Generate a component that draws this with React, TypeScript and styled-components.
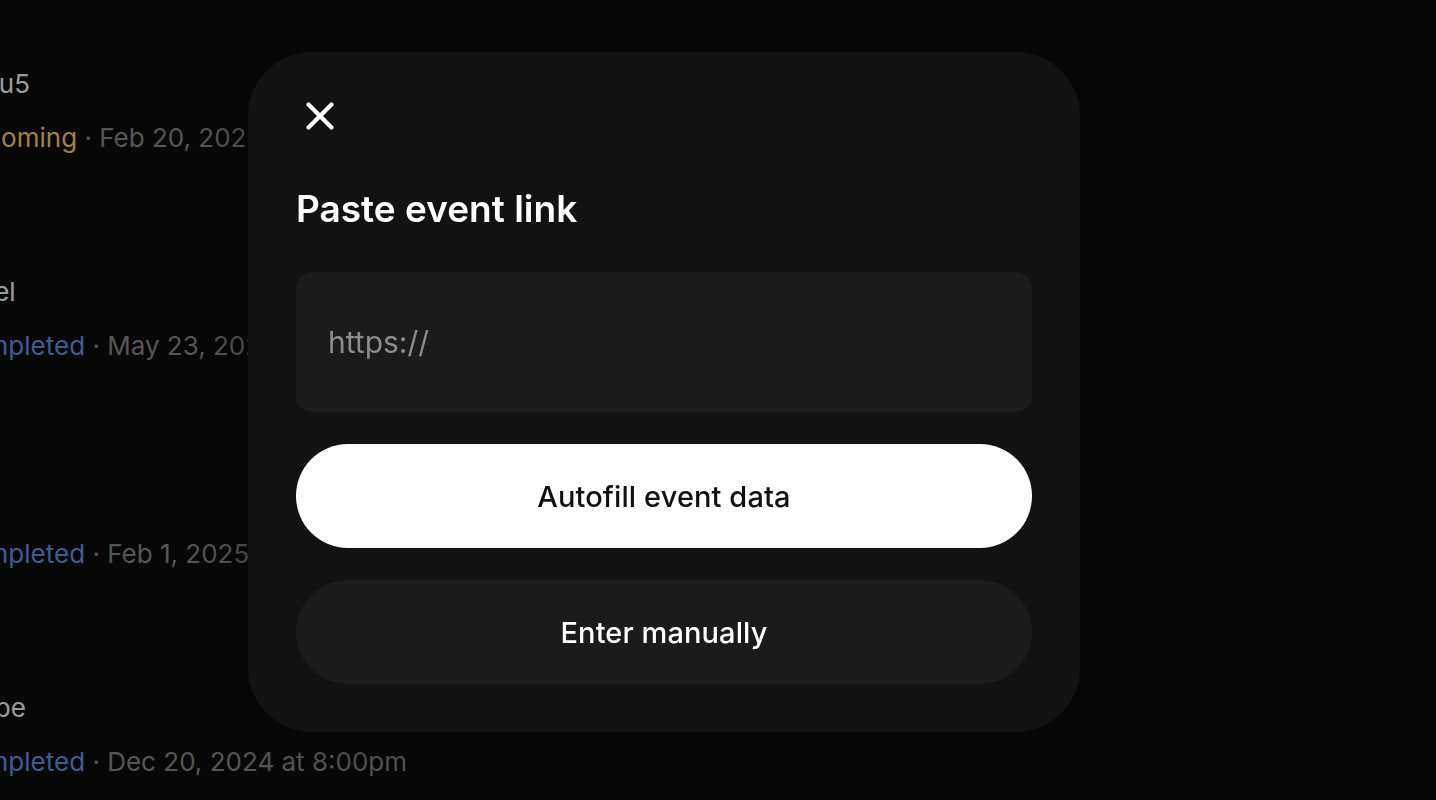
import React from "react";
import styled, { createGlobalStyle } from "styled-components";

const GlobalStyle = createGlobalStyle`
  html, body {
    margin: 0;
    padding: 0;
    background: #0c0c0c;
    font-family: Inter, "Noto Sans", sans-serif;
    -webkit-font-smoothing: antialiased;
  }
  body { overflow: hidden; }
  * { box-sizing: border-box; }
`;

const Page = styled.div`
  width: 1436px;
  height: 800px;
  overflow: hidden;
  background: #0c0c0c;
`;

const EventList = styled.ul`
  list-style: none;
  margin: 0 0 0 -49px;
  padding: 68px 0 0 0;
  display: flex;
  flex-direction: column;
  gap: 120px;
`;

const EventItem = styled.li`
  display: flex;
  flex-direction: column;
  gap: 20px;
  white-space: nowrap;
`;

const EventTitle = styled.div`
  font-size: 26px;
  line-height: 32px;
  color: #ededed;
  font-weight: 400;
`;

const EventMeta = styled.div`
  font-size: 26px;
  line-height: 36px;
  color: #858585;
`;

const Status = styled.span<{ $tone: "upcoming" | "completed" }>`
  color: ${(p) => (p.$tone === "upcoming" ? "#f0cb62" : "#5b92e4")};
`;

const Backdrop = styled.div`
  position: fixed;
  inset: 0;
  background: rgba(0, 0, 0, 0.35);
  display: flex;
  align-items: flex-start;
  justify-content: flex-start;
  padding: 52px 0 0 248px;
`;

const Dialog = styled.div`
  width: 832px;
  background: #121212;
  border-radius: 64px;
  padding: 40px 48px 48px;
  display: flex;
  flex-direction: column;
  box-shadow: 0 0 60px 10px rgba(0, 0, 0, 0.35);
`;

const CloseButton = styled.button`
  width: 48px;
  height: 48px;
  padding: 0;
  border: 0;
  background: transparent;
  display: flex;
  align-items: center;
  justify-content: center;
  cursor: pointer;
`;

const Title = styled.h2`
  margin: 47px 0 0;
  font-size: 37px;
  line-height: 44px;
  font-weight: 600;
  color: #ffffff;
  letter-spacing: 0;
`;

const UrlField = styled.input`
  margin-top: 41px;
  height: 140px;
  width: 100%;
  border: 0;
  outline: none;
  border-radius: 16px;
  background: #1b1b1b;
  padding: 0 32px;
  font-family: inherit;
  font-size: 30px;
  color: #ffffff;
  &::placeholder {
    color: #8c8c8c;
  }
`;

const ActionButton = styled.button<{ $primary?: boolean }>`
  margin-top: 32px;
  height: 104px;
  width: 100%;
  border: 0;
  border-radius: 52px;
  font-family: inherit;
  font-size: 29px;
  font-weight: 500;
  letter-spacing: 0.1px;
  background: ${(p) => (p.$primary ? "#ffffff" : "#1b1b1b")};
  color: ${(p) => (p.$primary ? "#111111" : "#ffffff")};
  cursor: pointer;
`;

const events = [
  { title: "Maru5", status: "Upcoming", tone: "upcoming" as const, date: "Feb 20, 2026 at 7:00pm" },
  { title: "Hotel", status: "Completed", tone: "completed" as const, date: "May 23, 2025 at 6:30pm" },
  { title: "Go", status: "Completed", tone: "completed" as const, date: "Feb 1, 2025 at 9:00pm" },
  { title: "Grape", status: "Completed", tone: "completed" as const, date: "Dec 20, 2024 at 8:00pm" },
];

export default function App() {
  return (
    <>
      <GlobalStyle />
      <Page>
        <EventList>
          {events.map((e) => (
            <EventItem key={e.title}>
              <EventTitle>{e.title}</EventTitle>
              <EventMeta>
                <Status $tone={e.tone}>{e.status}</Status> · {e.date}
              </EventMeta>
            </EventItem>
          ))}
        </EventList>
      </Page>
      <Backdrop>
        <Dialog role="dialog" aria-label="Paste event link">
          <CloseButton aria-label="Close">
            <svg width="28" height="28" viewBox="0 0 28 28" fill="none">
              <path d="M2.5 2.5 L25.5 25.5 M25.5 2.5 L2.5 25.5" stroke="#ffffff" strokeWidth="4.2" strokeLinecap="round" />
            </svg>
          </CloseButton>
          <Title>Paste event link</Title>
          <UrlField placeholder="https://" />
          <ActionButton $primary>Autofill event data</ActionButton>
          <ActionButton>Enter manually</ActionButton>
        </Dialog>
      </Backdrop>
    </>
  );
}
